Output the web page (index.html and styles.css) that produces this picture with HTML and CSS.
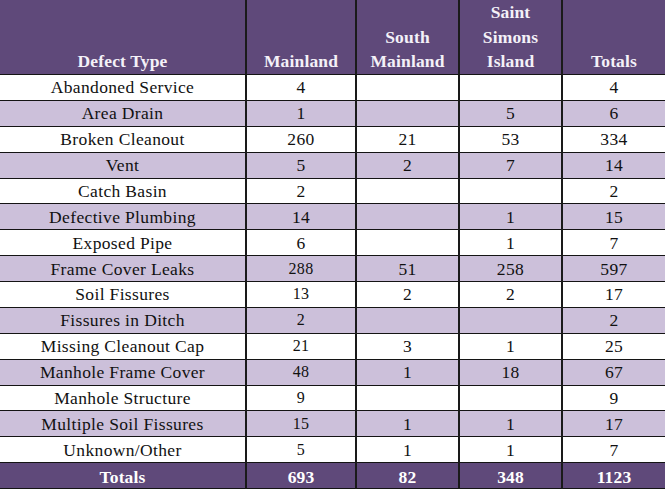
FILE: index.html
```html
<!DOCTYPE html>
<html lang="en">
<head>
<meta charset="utf-8">
<title>Defect Types</title>
<link rel="stylesheet" href="styles.css">
</head>
<body>
<table class="defects">
  <colgroup>
    <col class="c-type">
    <col class="c-main">
    <col class="c-south">
    <col class="c-ssi">
    <col class="c-tot">
  </colgroup>
  <thead>
    <tr class="head">
      <th>Defect Type</th>
      <th>Mainland</th>
      <th>South<br>Mainland</th>
      <th>Saint<br>Simons<br>Island</th>
      <th>Totals</th>
    </tr>
  </thead>
  <tbody>
    <tr><td>Abandoned Service</td><td>4</td><td></td><td></td><td>4</td></tr>
    <tr class="alt"><td>Area Drain</td><td>1</td><td></td><td>5</td><td>6</td></tr>
    <tr><td>Broken Cleanout</td><td>260</td><td>21</td><td>53</td><td>334</td></tr>
    <tr class="alt"><td>Vent</td><td>5</td><td>2</td><td>7</td><td>14</td></tr>
    <tr><td>Catch Basin</td><td>2</td><td></td><td></td><td>2</td></tr>
    <tr class="alt"><td>Defective Plumbing</td><td>14</td><td></td><td>1</td><td>15</td></tr>
    <tr><td>Exposed Pipe</td><td>6</td><td></td><td>1</td><td>7</td></tr>
    <tr class="alt"><td>Frame Cover Leaks</td><td class="sm">288</td><td>51</td><td>258</td><td>597</td></tr>
    <tr><td>Soil Fissures</td><td class="sm">13</td><td>2</td><td>2</td><td>17</td></tr>
    <tr class="alt"><td>Fissures in Ditch</td><td class="sm">2</td><td></td><td></td><td>2</td></tr>
    <tr><td>Missing Cleanout Cap</td><td class="sm">21</td><td>3</td><td>1</td><td>25</td></tr>
    <tr class="alt"><td>Manhole Frame Cover</td><td class="sm">48</td><td>1</td><td>18</td><td>67</td></tr>
    <tr><td>Manhole Structure</td><td class="sm">9</td><td></td><td></td><td>9</td></tr>
    <tr class="alt"><td>Multiple Soil Fissures</td><td class="sm">15</td><td>1</td><td>1</td><td>17</td></tr>
    <tr><td>Unknown/Other</td><td class="sm">5</td><td>1</td><td>1</td><td>7</td></tr>
  </tbody>
  <tfoot>
    <tr class="total"><td>Totals</td><td>693</td><td>82</td><td>348</td><td>1123</td></tr>
  </tfoot>
</table>
</body>
</html>
```
FILE: styles.css
```css
html, body {
  margin: 0;
  padding: 0;
  background: #ffffff;
}
body {
  font-family: "Liberation Serif", "DejaVu Serif", serif;
  font-size: 17.5px;
  color: #111111;
  overflow: hidden;
}
.defects {
  border-collapse: collapse;
  table-layout: fixed;
  width: 666px;
}
.c-type { width: 246px; }
.c-main { width: 110px; }
.c-south { width: 103px; }
.c-ssi { width: 103px; }
.c-tot { width: 104px; }

.defects th,
.defects td {
  text-align: center;
  padding: 0;
  border-left: 2px solid #1a1a1a;
  border-right: 2px solid #1a1a1a;
  border-bottom: 1px solid #141414;
  white-space: nowrap;
  overflow: hidden;
}
.defects tr > :first-child { border-left: none; }

.head {
  height: 74.5px;
  background: #5f497a;
}
.head th {
  color: #f4f1f8;
  font-weight: bold;
  letter-spacing: 0.15px;
  line-height: 24.2px;
  vertical-align: bottom;
  padding-bottom: 1px;
}
tbody tr {
  height: 25.875px;
}
tbody td {
  line-height: 20px;
  letter-spacing: 0.35px;
  padding-top: 3px;
  vertical-align: middle;
}
tbody tr.alt { background: #ccc0da; }
tbody td.sm { font-size: 16px; }

.total {
  height: 25.875px;
  background: #5f497a;
}
.total td {
  color: #ffffff;
  font-weight: bold;
  letter-spacing: 0.15px;
  line-height: 20px;
  padding-top: 3px;
  vertical-align: middle;
}
```
